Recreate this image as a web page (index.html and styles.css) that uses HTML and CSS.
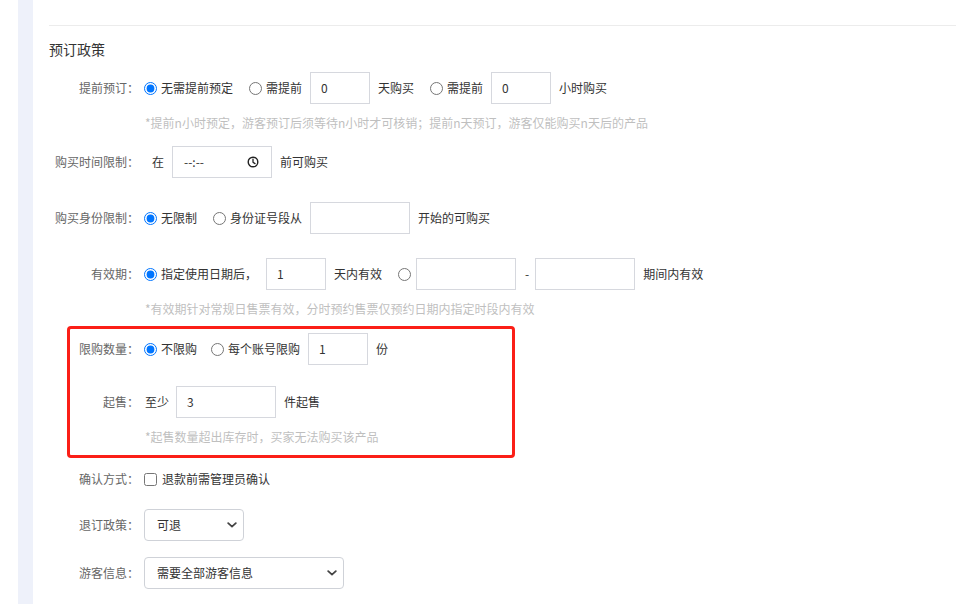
FILE: index.html
```html
<!DOCTYPE html>
<html lang="zh-CN">
<head>
<meta charset="utf-8">
<title>预订政策</title>
<link rel="stylesheet" href="styles.css">
</head>
<body>
<div class="page">
  <div class="gutter"></div>
  <div class="strip"></div>
  <div class="main">
    <div class="divider"></div>
    <div class="title">预订政策</div>

    <div class="row r1">
      <div class="label">提前预订：</div>
      <div class="ctrls">
        <input type="radio" name="adv" class="radio" checked><span class="opt">无需提前预定</span>
        <input type="radio" name="adv" class="radio"><span class="txt">需提前</span>
        <div class="input w60">0</div><span class="txt after">天购买</span>
        <input type="radio" name="adv" class="radio"><span class="txt">需提前</span>
        <div class="input w60">0</div><span class="txt after">小时购买</span>
      </div>
    </div>
    <div class="hint h1">*提前n小时预定，游客预订后须等待n小时才可核销；提前n天预订，游客仅能购买n天后的产品</div>

    <div class="row r2">
      <div class="label">购买时间限制：</div>
      <div class="ctrls">
        <span class="txt pre-zai">在</span>
        <div class="input time">
          <span>--:--</span>
          <svg class="clock" width="12" height="12" viewBox="0 0 12 12"><circle cx="6" cy="6" r="4.8" fill="none" stroke="#222" stroke-width="1.4"/><path d="M6 3.2 V6.2 L8 7.6" fill="none" stroke="#222" stroke-width="1.3" stroke-linecap="round" stroke-linejoin="round"/></svg>
        </div>
        <span class="txt after">前可购买</span>
      </div>
    </div>

    <div class="row r3">
      <div class="label">购买身份限制：</div>
      <div class="ctrls">
        <input type="radio" name="idl" class="radio" checked><span class="opt">无限制</span>
        <input type="radio" name="idl" class="radio"><span class="txt">身份证号段从</span>
        <div class="input w100"></div><span class="txt after">开始的可购买</span>
      </div>
    </div>

    <div class="row r4">
      <div class="label">有效期：</div>
      <div class="ctrls">
        <input type="radio" name="valid" class="radio" checked><span class="txt">指定使用日期后，</span>
        <div class="input w60 inp-after9">1</div><span class="txt after">天内有效</span>
        <input type="radio" name="valid" class="radio radio-tight">
        <div class="input w100"></div>
        <span class="dash">-</span>
        <div class="input w100"></div>
        <span class="txt after">期间内有效</span>
      </div>
    </div>
    <div class="hint h4">*有效期针对常规日售票有效，分时预约售票仅预约日期内指定时段内有效</div>

    <div class="row r5">
      <div class="label">限购数量：</div>
      <div class="ctrls">
        <input type="radio" name="lim" class="radio" checked><span class="opt opt-short">不限购</span>
        <input type="radio" name="lim" class="radio"><span class="txt">每个账号限购</span>
        <div class="input w60">1</div><span class="txt after">份</span>
      </div>
    </div>

    <div class="row r6">
      <div class="label">起售：</div>
      <div class="ctrls">
        <span class="txt pre-min">至少</span>
        <div class="input w100 inp-min">3</div><span class="txt after">件起售</span>
      </div>
    </div>
    <div class="hint h6">*起售数量超出库存时，买家无法购买该产品</div>

    <div class="row r7">
      <div class="label">确认方式：</div>
      <div class="ctrls">
        <input type="checkbox" class="check"><span class="txt">退款前需管理员确认</span>
      </div>
    </div>

    <div class="row r8">
      <div class="label">退订政策：</div>
      <div class="ctrls">
        <div class="select w100">
          <span>可退</span>
          <svg class="chev" width="10" height="6" viewBox="0 0 10 6"><path d="M1.2 1.2 L5 4.6 L8.8 1.2" fill="none" stroke="#444" stroke-width="1.8" stroke-linecap="round" stroke-linejoin="round"/></svg>
        </div>
      </div>
    </div>

    <div class="row r9">
      <div class="label">游客信息：</div>
      <div class="ctrls">
        <div class="select w200">
          <span>需要全部游客信息</span>
          <svg class="chev" width="10" height="6" viewBox="0 0 10 6"><path d="M1.2 1.2 L5 4.6 L8.8 1.2" fill="none" stroke="#444" stroke-width="1.8" stroke-linecap="round" stroke-linejoin="round"/></svg>
        </div>
      </div>
    </div>
  </div>
  <div class="highlight"></div>
</div>
</body>
</html>
```

FILE: styles.css
```css
* { box-sizing: border-box; }
html, body { margin: 0; padding: 0; background: #fff; }
body {
  font-family: "Noto Sans CJK SC", "Noto Sans", "Liberation Sans", sans-serif;
  font-size: 12px;
  color: #333;
}
.page {
  position: relative;
  display: flex;
  min-height: 604px;
  height: 604px;
  overflow: hidden;
}
.gutter { width: 18px; flex-shrink: 0; }
.strip { width: 15px; flex-shrink: 0; background: #eef1fa; }
.main { flex: 1; padding-left: 16px; padding-top: 25px; }
.divider { height: 1px; background: #ececec; }
.title {
  margin-top: 13px;
  font-size: 14px;
  line-height: 20px;
  color: #333;
}
.row {
  display: flex;
  align-items: center;
  height: 32px;
}
.label {
  width: 90px;
  flex-shrink: 0;
  text-align: right;
  color: #666;
  line-height: 18px;
  white-space: nowrap;
}
.ctrls {
  display: flex;
  align-items: center;
  white-space: nowrap;
  line-height: 18px;
}
.radio {
  width: 13px;
  height: 13px;
  margin: 0 4px 0 5px;
  flex-shrink: 0;
}
.radio-tight { margin-right: 5px; }
.opt { margin-right: 11px; }
.opt-short { margin-right: 9px; }
.txt { color: #333; }
.after { margin-left: 8px; margin-right: 11px; }
.input {
  height: 32px;
  border: 1px solid #d6d8de;
  background: #fff;
  padding-left: 10px;
  display: flex;
  align-items: center;
  color: #333;
  margin-left: 8px;
  flex-shrink: 0;
}
.w60 { width: 60px; }
.w100 { width: 100px; }
.w200 { width: 200px; }
.radio-tight + .input { margin-left: 0; }
.inp-after9 { margin-left: 9px; }
.dash { margin: 0 6px 0 9px; color: #333; }
.dash + .input { margin-left: 0; }
.pre-zai { margin-left: 13px; }
.pre-min { margin-left: 6px; }
.inp-min { margin-left: 7px; }
.time {
  width: 100px;
  justify-content: space-between;
  padding-left: 11px;
  padding-right: 12px;
}
.clock { display: block; }
.hint {
  margin-left: 96px;
  margin-top: 10px;
  line-height: 18px;
  color: #bfbfbf;
  white-space: nowrap;
}
.r1 { margin-top: 13px; }
.r2 { margin-top: 14px; }
.r3 { margin-top: 24px; }
.r4 { margin-top: 24px; }
.r5 { margin-top: 15px; }
.r6 { margin-top: 21px; }
.r7 { margin-top: 17px; }
.r8 { margin-top: 14px; }
.r9 { margin-top: 16px; }
.check {
  width: 13px;
  height: 13px;
  margin: 0 5px 0 5px;
}
.select {
  height: 32px;
  margin-left: 5px;
  border: 1px solid #cfd2d8;
  border-radius: 4px;
  display: flex;
  align-items: center;
  justify-content: space-between;
  padding-left: 12px;
  padding-right: 6px;
  color: #333;
  background: #fff;
}
.chev { display: block; }
.highlight {
  position: absolute;
  left: 67px;
  top: 326px;
  width: 448px;
  height: 132px;
  border: 3px solid #fb1f17;
  border-radius: 4px;
  pointer-events: none;
}
```
